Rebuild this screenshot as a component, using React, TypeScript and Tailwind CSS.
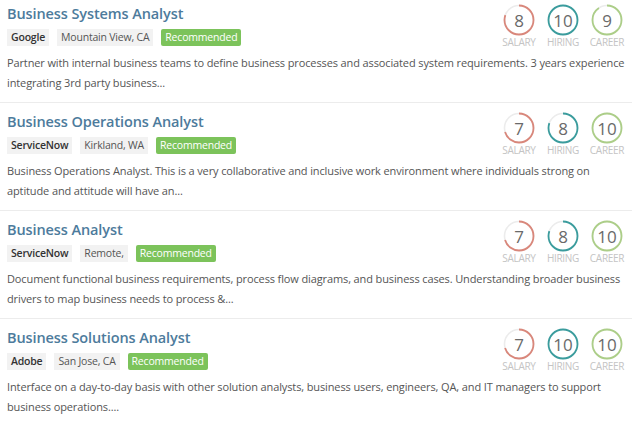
import React from "react";

interface Job {
  title: string;
  company: string;
  location: string;
  description: string;
  salary: number;
  hiring: number;
  career: number;
}

const jobs: Job[] = [
  {
    title: "Business Systems Analyst",
    company: "Google",
    location: "Mountain View, CA",
    description:
      "Partner with internal business teams to define business processes and associated system requirements. 3 years experience integrating 3rd party business...",
    salary: 8,
    hiring: 10,
    career: 9,
  },
  {
    title: "Business Operations Analyst",
    company: "ServiceNow",
    location: "Kirkland, WA",
    description:
      "Business Operations Analyst. This is a very collaborative and inclusive work environment where individuals strong on aptitude and attitude will have an...",
    salary: 7,
    hiring: 8,
    career: 10,
  },
  {
    title: "Business Analyst",
    company: "ServiceNow",
    location: "Remote,",
    description:
      "Document functional business requirements, process flow diagrams, and business cases. Understanding broader business drivers to map business needs to process &...",
    salary: 7,
    hiring: 8,
    career: 10,
  },
  {
    title: "Business Solutions Analyst",
    company: "Adobe",
    location: "San Jose, CA",
    description:
      "Interface on a day-to-day basis with other solution analysts, business users, engineers, QA, and IT managers to support business operations....",
    salary: 7,
    hiring: 10,
    career: 10,
  },
];

function Score({ value, color, label }: { value: number; color: string; label: string }) {
  const r = 14.5;
  const c = 2 * Math.PI * r;
  const len = (value / 10) * c;
  return (
    <div className="flex w-[44px] flex-col items-center">
      <div className="relative h-[32px] w-[32px]">
        <svg width="32" height="32" viewBox="0 0 32 32" className="absolute inset-0">
          <circle cx="16" cy="16" r={r} fill="none" stroke="#ececec" strokeWidth="1.6" />
          <circle
            cx="16"
            cy="16"
            r={r}
            fill="none"
            stroke={color}
            strokeWidth="1.8"
            strokeDasharray={`${len} ${c}`}
            transform="rotate(-90 16 16)"
          />
        </svg>
        <div className="absolute inset-0 flex items-center justify-center text-[17px] leading-none text-[#6a6a6a]">
          {value}
        </div>
      </div>
      <div className="mt-[1px] text-[10px] leading-[11px] tracking-[-0.3px] text-[#c4c4c4]">{label}</div>
    </div>
  );
}

function JobCard({ job }: { job: Job }) {
  return (
    <div className="border-b border-[#ececec] pb-[9px] pl-[7px] pr-[3px] pt-[9px]">
      <div className="flex items-start justify-between">
        <div>
          <div className="text-[14.5px] font-semibold leading-[20px] tracking-[-0.1px] text-[#4d7b9c]">{job.title}</div>
          <div className="mt-[5px] flex items-center gap-[8px] text-[10.5px] leading-[17px] tracking-[-0.2px]">
            <span className="bg-[#f2f2f2] px-[4px] font-semibold text-[#333]">{job.company}</span>
            <span className="bg-[#f2f2f2] px-[4px] text-[#555]">{job.location}</span>
            <span className="rounded-[2px] bg-[#7cc35b] px-[4px] text-white">Recommended</span>
          </div>
        </div>
        <div className="flex">
          <Score value={job.salary} color="#d9877b" label="SALARY" />
          <Score value={job.hiring} color="#3a9c9d" label="HIRING" />
          <Score value={job.career} color="#acce88" label="CAREER" />
        </div>
      </div>
      <p className="mt-[5px] text-[11px] leading-[20px] tracking-[-0.12px] text-[#555]">{job.description}</p>
    </div>
  );
}

export default function App() {
  return (
    <div
      className="h-[426px] w-[640px] overflow-hidden bg-white"
      style={{ fontFamily: '"Open Sans", "Liberation Sans", sans-serif' }}
    >
      <div className="-mt-[5px] w-[632px]">
        {jobs.map((job) => (
          <JobCard key={job.title} job={job} />
        ))}
      </div>
    </div>
  );
}
